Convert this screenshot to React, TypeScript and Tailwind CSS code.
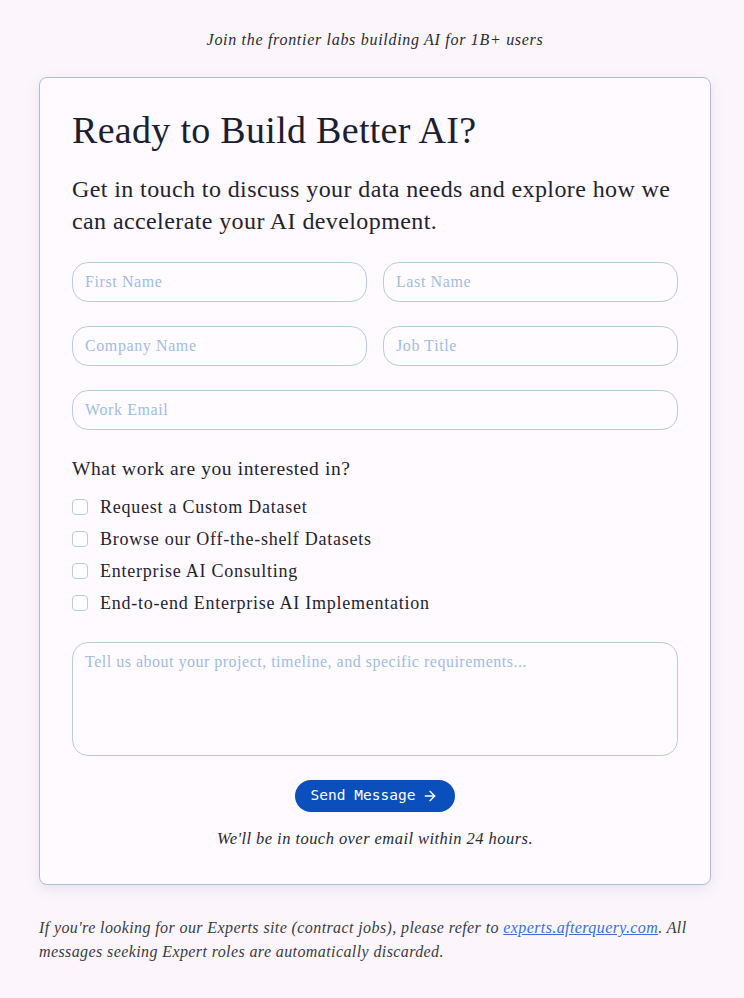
import { ArrowRight } from 'lucide-react'

const serif = { fontFamily: '"Liberation Serif", "Times New Roman", serif' }

const interests = [
  'Request a Custom Dataset',
  'Browse our Off-the-shelf Datasets',
  'Enterprise AI Consulting',
  'End-to-end Enterprise AI Implementation',
]

function Field({ placeholder }: { placeholder: string }) {
  return (
    <input
      placeholder={placeholder}
      className="h-10 w-full rounded-2xl border border-[#b3cde6] bg-[#fffbff] px-3 text-[16px] tracking-[0.6px] text-[#1e293b] outline-none placeholder:text-[#9fbde3]"
      style={serif}
    />
  )
}

export default function App() {
  return (
    <div className="min-h-screen bg-[#fcf6fc] pl-[39px] pr-[33px] pt-[30px] pb-8 text-[#1f2430]" style={serif}>
      <p className="text-center text-[16px] italic leading-5 tracking-[0.7px] text-[#2a2a33]">
        Join the frontier labs building AI for 1B+ users
      </p>

      {/* Card */}
      <div className="mt-[27px] rounded-lg border border-[#a9bedb] bg-[#fffaff] px-8 pt-[30px] pb-[33px] shadow-[0_4px_14px_rgba(80,70,120,0.12)]">
        <h1 className="text-[38px] leading-[44px] tracking-[0.3px] text-[#1b2030]">Ready to Build Better AI?</h1>
        <p className="mt-[21px] text-[24px] leading-8 tracking-[0.4px] text-[#1f2430]">
          Get in touch to discuss your data needs and explore how we can accelerate your AI development.
        </p>

        <div className="mt-[25px] grid grid-cols-2 gap-x-4 gap-y-6">
          <Field placeholder="First Name" />
          <Field placeholder="Last Name" />
          <Field placeholder="Company Name" />
          <Field placeholder="Job Title" />
          <div className="col-span-2">
            <Field placeholder="Work Email" />
          </div>
        </div>

        <p className="mt-[25px] text-[19.5px] leading-7 tracking-[0.6px]">What work are you interested in?</p>
        <div className="mt-[12px] flex flex-col gap-2">
          {interests.map((label) => (
            <label key={label} className="flex h-6 items-center gap-3 text-[18px] tracking-[0.75px]">
              <span className="h-4 w-4 rounded-[4px] border border-[#b6cbe4] bg-white" />
              {label}
            </label>
          ))}
        </div>

        <textarea
          placeholder="Tell us about your project, timeline, and specific requirements..."
          className="mt-[27px] block h-[114px] w-full resize-none rounded-2xl border border-[#b3cde6] bg-[#fffbff] px-3 py-[9px] text-[16px] leading-5 tracking-[0.5px] outline-none placeholder:text-[#9fbde3]"
          style={serif}
        />

        <div className="mt-6 flex justify-center">
          <button
            className="flex h-8 items-center gap-[7px] rounded-full bg-[#0b4fbd] pl-4 pr-[17px] text-[14.5px] text-white"
            style={{ fontFamily: '"DejaVu Sans Mono", "Liberation Mono", monospace' }}
          >
            Send Message
            <ArrowRight className="h-4 w-4" strokeWidth={2} />
          </button>
        </div>
        <p className="mt-[15px] text-center text-[16.5px] italic leading-6 tracking-[0.45px] text-[#2a2a33]">
          We'll be in touch over email within 24 hours.
        </p>
      </div>

      <p className="mt-[31px] text-[16px] italic leading-6 tracking-[0.4px] text-[#3a3a44]">
        If you're looking for our Experts site (contract jobs), please refer to{' '}
        <a className="text-[#3b6fd4] underline">experts.afterquery.com</a>. All messages seeking Expert roles are
        automatically discarded.
      </p>
    </div>
  )
}
